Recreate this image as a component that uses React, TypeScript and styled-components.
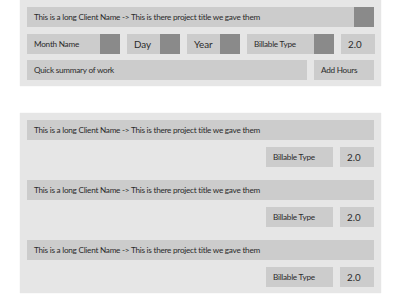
import React, { ReactElement } from "react";
import styled, { createGlobalStyle } from "styled-components";

const GlobalStyle = createGlobalStyle`
  html, body {
    margin: 0;
    padding: 0;
    background: #ffffff;
  }
  body {
    font-family: Lato, "Liberation Sans", sans-serif;
    color: #2b2b2b;
  }
`;

const Page = styled.div`
  width: 400px;
  height: 300px;
  overflow: hidden;
  display: flex;
  flex-direction: column;
  gap: 27px;
  padding-left: 20px;
  box-sizing: border-box;
`;

const Panel = styled.div`
  width: 361px;
  box-sizing: border-box;
  background: #e6e6e6;
  padding: 7px 7px 6px 7px;
  display: flex;
  flex-direction: column;
  box-shadow: 0 0 1px rgba(0, 0, 0, 0.12);
`;

const Row = styled.div<{ $gapTop?: number; $right?: boolean }>`
  display: flex;
  gap: 7px;
  margin-top: ${(p) => p.$gapTop ?? 0}px;
  justify-content: ${(p) => (p.$right ? "flex-end" : "flex-start")};
`;

const Field = styled.div<{ $w?: number; $big?: boolean }>`
  height: 20px;
  background: #cccccc;
  display: flex;
  align-items: center;
  justify-content: space-between;
  box-sizing: border-box;
  padding-left: 7px;
  font-size: ${(p) => (p.$big ? "9.8px" : "8.2px")};
  letter-spacing: ${(p) => (p.$big ? "0" : "-0.25px")};
  white-space: nowrap;
  ${(p) => (p.$w ? `width: ${p.$w}px; flex: none;` : "flex: 1;")}
`;

const Handle = styled.span`
  width: 20px;
  height: 20px;
  background: #8a8a8a;
  flex: none;
`;

const TITLE = "This is a long Client Name -> This is there project title we gave them";

const Entry = ({ first }: { first?: boolean }): ReactElement => (
  <>
    <Row $gapTop={first ? 0 : 13}>
      <Field>{TITLE}</Field>
    </Row>
    <Row $gapTop={7} $right>
      <Field $w={67}>Billable Type</Field>
      <Field $w={34} $big>
        2.0
      </Field>
    </Row>
  </>
);

export default function App(): ReactElement {
  return (
    <>
      <GlobalStyle />
      <Page>
        <Panel>
          <Row>
            <Field>
              {TITLE}
              <Handle />
            </Field>
          </Row>
          <Row $gapTop={7}>
            <Field $w={93}>
              Month Name
              <Handle />
            </Field>
            <Field $w={53} $big>
              Day
              <Handle />
            </Field>
            <Field $w={53} $big>
              Year
              <Handle />
            </Field>
            <Field $w={87}>
              Billable Type
              <Handle />
            </Field>
            <Field $w={34} $big>
              2.0
            </Field>
          </Row>
          <Row $gapTop={6}>
            <Field>Quick summary of work</Field>
            <Field $w={60}>Add Hours</Field>
          </Row>
        </Panel>
        <Panel>
          <Entry first />
          <Entry />
          <Entry />
        </Panel>
      </Page>
    </>
  );
}
